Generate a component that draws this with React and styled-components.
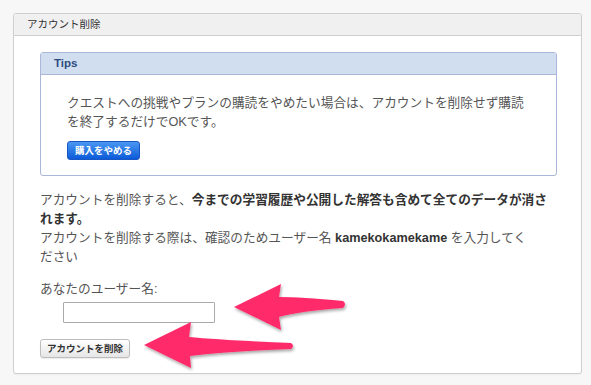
import React from 'react';
import styled, { createGlobalStyle } from 'styled-components';

const GlobalStyle = createGlobalStyle`
  html, body {
    margin: 0;
    padding: 0;
    background: #f7f7f7;
  }
  body {
    font-family: 'Liberation Sans', 'Noto Sans CJK JP', sans-serif;
  }
`;

const Page = styled.div`
  position: relative;
  width: 591px;
  height: 385px;
  padding: 13px 9px 0 13px;
  box-sizing: border-box;
`;

const Panel = styled.div`
  background: #fff;
  border: 1px solid #cfcfcf;
  border-radius: 3px;
  box-shadow: 0 1px 1px rgba(0, 0, 0, 0.04);
`;

const PanelHeader = styled.div`
  height: 21px;
  line-height: 21px;
  padding-left: 13px;
  background: #f0f0f0;
  border-bottom: 1px solid #cfcfcf;
  border-radius: 3px 3px 0 0;
  font-size: 10.5px;
  color: #333;
`;

const PanelBody = styled.div`
  padding: 16px 24px 15px 26px;
`;

const TipsBox = styled.div`
  border: 1px solid #a9b6d9;
  border-radius: 3px;
  background: #fff;
`;

const TipsHeader = styled.div`
  height: 21px;
  line-height: 21px;
  padding-left: 13px;
  background: #d1deef;
  border-bottom: 1px solid #a9b6d9;
  font-size: 11.5px;
  font-weight: bold;
  color: #2c4b7e;
`;

const TipsBody = styled.div`
  padding: 19px 25px 15px 26px;
`;

const Text = styled.p`
  margin: 0;
  font-size: 12.7px;
  line-height: 19px;
  color: #555;

  b {
    color: #333;
  }
`;

const BlueButton = styled.button`
  margin-top: 9px;
  height: 19px;
  padding: 0 7px;
  border: 1px solid #1a55c4;
  border-radius: 3px;
  background: linear-gradient(#4a97f2, #0b5bd9);
  color: #fff;
  font-family: inherit;
  font-size: 9.5px;
  font-weight: bold;
  line-height: 17px;
`;

const Notice = styled(Text)`
  margin-top: 15px;
`;

const Label = styled(Text)`
  margin-top: 13px;
`;

const InputRow = styled.div`
  padding: 3px 0 0 23px;
`;

const NameInput = styled.input`
  display: block;
  width: 152px;
  height: 21px;
  box-sizing: border-box;
  border: 1px solid #aaa;
  border-radius: 1px;
  background: #fff;
  outline: none;
`;

const DeleteButton = styled.button`
  display: block;
  margin-top: 16px;
  width: 90px;
  height: 19px;
  padding: 0;
  border: 1px solid #bdbdbd;
  border-radius: 3px;
  background: linear-gradient(#ffffff, #e6e6e6);
  color: #333;
  font-family: inherit;
  font-size: 9.5px;
  font-weight: bold;
  line-height: 17px;
  box-shadow: 0 1px 1px rgba(0, 0, 0, 0.08);
`;

const Overlay = styled.svg`
  position: absolute;
  top: 0;
  left: 0;
  pointer-events: none;
`;

const Arrows = () => (
  <Overlay width="591" height="385" viewBox="0 0 591 385">
    <defs>
      <filter id="shadow" x="-10%" y="-20%" width="130%" height="150%">
        <feDropShadow dx="1" dy="2" stdDeviation="1.4" floodColor="#000" floodOpacity="0.35" />
      </filter>
    </defs>
    <g fill="#ff2c6b" filter="url(#shadow)">
      <path d="M234 307 L281 284 L279 297 Q300 297 343 301 Q347 304 343 308 Q300 311 279 317 L281 330 Z" />
      <path d="M144 345 L191 322 L189 337 Q220 340 291 343 Q295 346 291 349 Q230 351 190 356 L191 368 Z" />
    </g>
  </Overlay>
);

const App = () => {
  return (
    <Page>
      <GlobalStyle />
      <Panel>
        <PanelHeader>アカウント削除</PanelHeader>
        <PanelBody>
          <TipsBox>
            <TipsHeader>Tips</TipsHeader>
            <TipsBody>
              <Text>
                クエストへの挑戦やプランの購読をやめたい場合は、アカウントを削除せず購読<br />
                を終了するだけでOKです。
              </Text>
              <BlueButton>購入をやめる</BlueButton>
            </TipsBody>
          </TipsBox>
          <Notice>
            アカウントを削除すると、<b>今までの学習履歴や公開した解答も含めて全てのデータが消さ<br />
            れます。</b>
            <br />
            アカウントを削除する際は、確認のためユーザー名 <b>kamekokamekame</b> を入力してく<br />
            ださい
          </Notice>
          <Label>あなたのユーザー名:</Label>
          <InputRow>
            <NameInput type="text" />
          </InputRow>
          <DeleteButton>アカウントを削除</DeleteButton>
        </PanelBody>
      </Panel>
      <Arrows />
    </Page>
  );
};

export default App;
